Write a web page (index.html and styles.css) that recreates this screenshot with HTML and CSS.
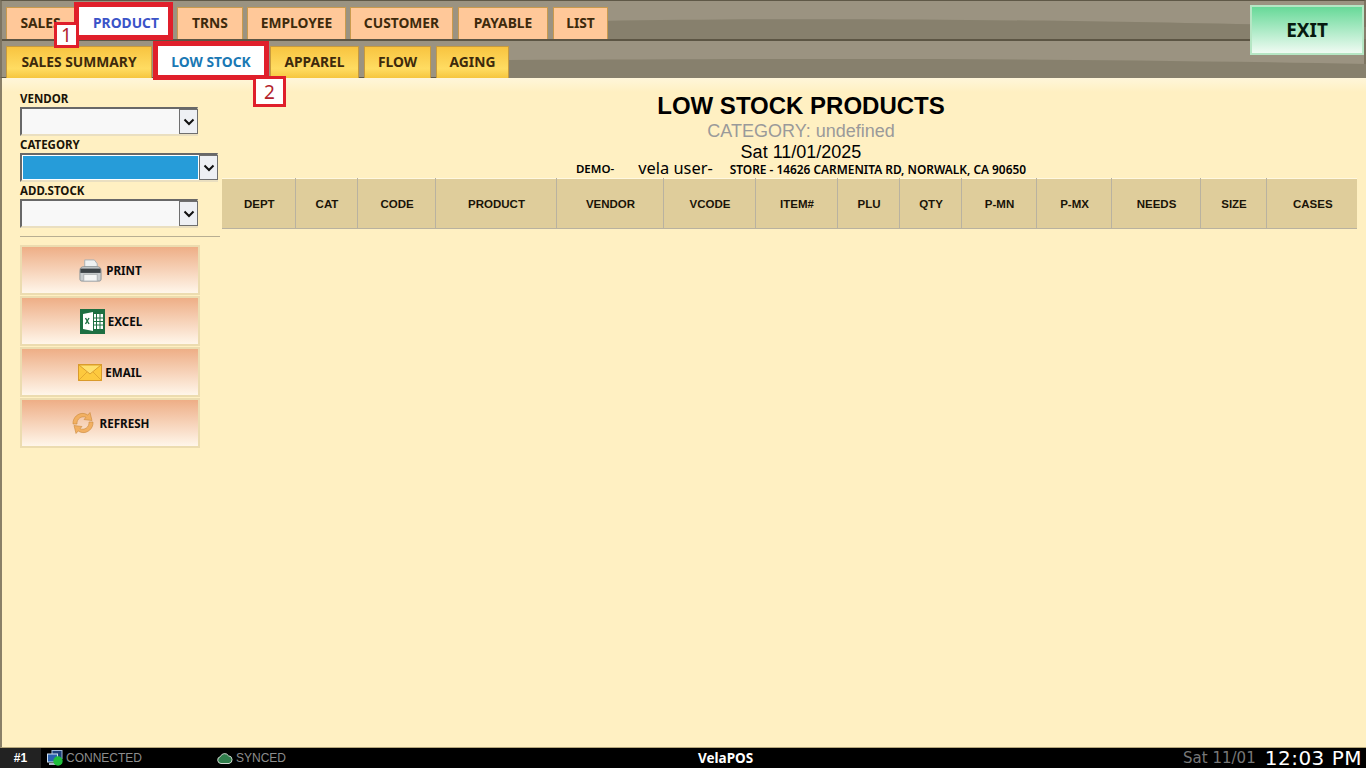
FILE: index.html
```html
<!DOCTYPE html>
<html lang="en">
<head>
<meta charset="utf-8">
<title>Low Stock Products</title>
<link rel="stylesheet" href="styles.css">
</head>
<body>
<div class="app">
  <header class="nav">
    <svg class="wave" viewBox="0 0 1366 78" preserveAspectRatio="none" aria-hidden="true">
      <path class="wave-low" d="M600 21 C800 18 1000 18 1366 27 L1366 39 L600 39 Z"/>
      <path class="wave-low" d="M505 60 C800 59 1000 57 1366 64 L1366 78 L505 78 Z"/>
    </svg>
    <div class="tabrow tabrow-main">
      <a class="tab w-sales">SALES</a>
      <a class="tab w-product active-main">PRODUCT</a>
      <a class="tab w-trns">TRNS</a>
      <a class="tab w-employee">EMPLOYEE</a>
      <a class="tab w-customer">CUSTOMER</a>
      <a class="tab w-payable">PAYABLE</a>
      <a class="tab w-list">LIST</a>
    </div>
    <div class="tabrow tabrow-sub">
      <a class="tab sub w-summary">SALES SUMMARY</a>
      <a class="tab sub w-low active-sub">LOW STOCK</a>
      <a class="tab sub w-apparel">APPAREL</a>
      <a class="tab sub w-flow">FLOW</a>
      <a class="tab sub w-aging">AGING</a>
    </div>
    <button class="exit">EXIT</button>
    <span class="callout callout-1">1</span>
    <span class="callout callout-2">2</span>
  </header>

  <main class="main">
    <aside class="side">
      <div class="field">
        <label class="field-label">VENDOR</label>
        <div class="select"><span class="select-value"></span><span class="select-arrow"><svg viewBox="0 0 12 8"><path d="M1.5 1.5 6 6l4.5-4.5"/></svg></span></div>
      </div>
      <div class="field">
        <label class="field-label">CATEGORY</label>
        <div class="select select-wide"><span class="select-value selected"></span><span class="select-arrow"><svg viewBox="0 0 12 8"><path d="M1.5 1.5 6 6l4.5-4.5"/></svg></span></div>
      </div>
      <div class="field">
        <label class="field-label">ADD.STOCK</label>
        <div class="select"><span class="select-value"></span><span class="select-arrow"><svg viewBox="0 0 12 8"><path d="M1.5 1.5 6 6l4.5-4.5"/></svg></span></div>
      </div>
      <hr class="rule">
      <div class="actions">
        <button class="action">
          <svg class="ico" viewBox="0 0 26 26"><path d="M7 2h10l3 4v6H7z" fill="#eef1f2" stroke="#a9b0b4"/><path d="M2 13c0-3 2-4 4-4h14c2 0 4 1 4 4v9c0 1.500-1 2-2 2H4c-1 0-2-.5-2-2z" fill="#c8ccce" stroke="#8e9497"/><rect x="2.500" y="11" width="21" height="4.500" fill="#3c4347"/><rect x="6" y="17" width="14" height="7" fill="#f4f5f5" stroke="#aeb3b5"/></svg>
          <span>PRINT</span>
        </button>
        <button class="action">
          <svg class="ico ico-excel" viewBox="0 0 25 25"><rect width="25" height="25" fill="#1d6f42"/><path d="M3 5l10-2v19L3 20z" fill="#fff"/><rect x="14" y="5" width="9" height="15" fill="#fff"/><path d="M16.500 5v15M20 5v15M14 9h9M14 12.500h9M14 16h9" stroke="#1d6f42"/><path d="M5.500 9l3.500 6M9 9l-3.500 6" stroke="#1d6f42" stroke-width="1.400"/></svg>
          <span>EXCEL</span>
        </button>
        <button class="action">
          <svg class="ico ico-mail" viewBox="0 0 24 17"><rect x=".5" y=".5" width="23" height="16" fill="#fdc93e" stroke="#d99a2b"/><path d="M.5 16.500 9 8M23.500 16.500 15 8" stroke="#e5a92f"/><path d="M1 1l11 9L23 1z" fill="#ffe06f" stroke="#dc9f2e"/></svg>
          <span>EMAIL</span>
        </button>
        <button class="action">
          <svg class="ico ico-refresh" viewBox="0 0 24 24"><g fill="#f2b062" stroke="#c98a3e" stroke-width=".6"><path d="M2 13C1.500 6.500 7.500 1.500 13 2.500c1.500.3 2.800.8 3.800 1.600L19 1.500l2 8-8-1 2-2.200C11 4.500 5.500 7.500 6 13z"/><path d="M22 11c.5 6.500-5.500 11.500-11 10.500-1.500-.3-2.800-.8-3.800-1.600L5 22.500l-2-8 8 1-2 2.200c4 1.800 9.500-1.200 9-6.700z"/></g></svg>
          <span>REFRESH</span>
        </button>
      </div>
    </aside>

    <section class="report">
      <div class="report-head">
        <h1 class="report-title">LOW STOCK PRODUCTS</h1>
        <div class="report-cat">CATEGORY: undefined</div>
        <div class="report-date">Sat 11/01/2025</div>
        <div class="report-meta"><b class="meta-demo">DEMO-</b><span class="meta-user">vela user-</span><b class="meta-store">STORE - 14626 CARMENITA RD, NORWALK, CA 90650</b></div>
      </div>
      <table class="grid">
        <thead>
          <tr>
            <th class="c-dept">DEPT</th><th class="c-cat">CAT</th><th class="c-code">CODE</th><th class="c-product">PRODUCT</th><th class="c-vendor">VENDOR</th><th class="c-vcode">VCODE</th><th class="c-item">ITEM#</th><th class="c-plu">PLU</th><th class="c-qty">QTY</th><th class="c-pmn">P-MN</th><th class="c-pmx">P-MX</th><th class="c-needs">NEEDS</th><th class="c-size">SIZE</th><th class="c-cases">CASES</th>
          </tr>
        </thead>
      </table>
    </section>
  </main>

  <footer class="status">
    <div class="station">#1</div>
    <div class="stat stat-conn">
      <svg class="stat-ico" viewBox="0 0 16 16"><rect x="5" y=".5" width="10" height="8" fill="#1d3f7a" stroke="#9fb7d8"/><rect x=".5" y="4" width="10" height="8" fill="#2a62b0" stroke="#cfe0f2"/><rect x="2" y="13" width="7" height="2" fill="#a8b8c8"/><circle cx="11" cy="11" r="4.700" fill="#1fbf3c"/></svg>
      <span>CONNECTED</span>
    </div>
    <div class="stat stat-sync">
      <svg class="stat-ico cloud" viewBox="0 0 16 11"><path d="M4 10.500a3.500 3.500 0 0 1-.6-6.900A4.500 4.500 0 0 1 11.500 2.800 3.900 3.900 0 0 1 12 10.500z" fill="#2f7d4b" stroke="#cfd6cf"/></svg>
      <span>SYNCED</span>
    </div>
    <div class="brand">VelaPOS</div>
    <div class="clock"><span class="clock-date">Sat 11/01</span><span class="clock-time">12:03 PM</span></div>
  </footer>
</div>
</body>
</html>
```
FILE: styles.css
```css
* { box-sizing: border-box; }
html, body { margin: 0; height: 100%; overflow: hidden; }
body { font-family: "Noto Sans", "Open Sans", sans-serif; color: #000; background: #fff0c2; }

.app { width: 1366px; height: 768px; display: flex; flex-direction: column; }

/* top navigation */
.nav {
  position: relative;
  flex: 0 0 78px;
  min-height: 0;
  height: 78px;
  background: #9b9381;
  border-top: 1px solid #5f5847;
  border-left: 2px solid #7d7461;
  border-right: 2px solid #7d7461;
  border-bottom: 1px solid #5f5847;
}
.wave { position: absolute; left: -2px; top: -1px; width: 1366px; height: 78px; }
.wave-low { fill: #87806d; }
.tabrow { position: relative; display: flex; padding-left: 4px; align-items: flex-end; }
.tabrow-main { height: 40px; gap: 4px; border-bottom: 2px solid #5c5544; }
.tabrow-sub { height: 37px; gap: 5px; }
.tab {
  display: flex; align-items: center; justify-content: center;
  height: 32px; padding-bottom: 2px;
  font-size: 13.800px; font-weight: 700; color: #3d2a0c;
  background: #ffc899;
  border: 1px solid #c99a4e;
  border-bottom: 0;
  white-space: nowrap;
}
.tab.sub { background: linear-gradient(#f8c440, #ffdc62 70%, #f6c63e); border-color: #c79a3e; }
.w-sales { width: 69px; }
.w-product { width: 93px; }
.w-trns { width: 66px; margin-left: 2px; }
.w-employee { width: 99px; }
.w-customer { width: 103px; }
.w-payable { width: 90px; margin-left: 1px; }
.w-list { width: 55px; margin-left: 1px; }
.w-summary { width: 146px; }
.w-low { width: 110px; }
.w-apparel { width: 89px; }
.w-flow { width: 67px; }
.w-aging { width: 73px; }
.tab.active-main {
  align-self: flex-start;
  height: 32px; margin: 4px 1px 0 -2px; padding: 3px 0 0 5px;
  background: #fff; color: #3a53c8;
  outline: 5px solid #e01f2b; outline-offset: -2px; border: 0; z-index: 1;
}
.tab.active-sub {
  align-self: flex-start;
  height: 33px; margin: 3px -1px 0 -1px; padding: 1px 0 0;
  background: #fff; color: #1a78b4;
  outline: 5px solid #e01f2b; outline-offset: -2px; border: 0; z-index: 1;
}
.exit {
  position: absolute; top: 4px; right: 0; width: 114px; height: 50px;
  font: 700 19px "Noto Sans", sans-serif; color: #071a10;
  background: linear-gradient(#67d998, #f0fbf3);
  border: 2px solid #b6e6c4;
  padding: 0; z-index: 2;
}
.callout {
  position: absolute; z-index: 3;
  display: flex; align-items: center; justify-content: center;
  background: #fff; color: #b3232d;
  font: 400 19px "Noto Sans", sans-serif;
  border: 3px solid #e01f2b;
}
.callout-1 { left: 52px; top: 21px; width: 25px; height: 26px; }
.callout-2 { left: 251px; top: 75px; width: 33px; height: 31px; }

/* body */
.main {
  flex: 1; display: flex; min-height: 0;
  border-left: 2px solid #8a8068;
  border-bottom: 1px solid #b5a67a;
  background: linear-gradient(#fff6da, #fff0c2 14px);
}
.side { flex: 0 0 220px; padding: 13px 0 0 18px; }
.field { margin-bottom: 1px; }
.field-label { display: block; height: 16px; font-size: 11.500px; font-weight: 700; line-height: 16px; color: #1a1408; }
.select { display: flex; width: 178px; height: 29px; margin-bottom: 1px; background: #f8f8f8; border-top: 2px solid #686868; border-left: 2px solid #686868; border-right: 1px solid #eadfc0; border-bottom: 2px solid #eadfc0; }
.select-wide { width: 198px; }
.select-value { flex: 1; }
.select-value.selected { background: #269cd9; border: 1px solid #fff; margin: 0; }
.select-arrow { flex: 0 0 19px; margin-right: -1px; display: flex; align-items: center; justify-content: center; background: #eef0f4; border: 1px solid #6f6f6f; }
.select-arrow svg { width: 12px; height: 8px; fill: none; stroke: #101010; stroke-width: 2; }
.rule { width: 200px; height: 1px; margin: 8px 0 8px; border: 0; background: #b8ae92; }
.actions { display: flex; flex-direction: column; gap: 1px; }
.action {
  width: 180px; height: 50px; padding: 0;
  display: flex; align-items: center; justify-content: center; gap: 3px;
  font: 700 11.600px "Noto Sans", sans-serif; color: #0c0c0c;
  background: linear-gradient(#eeae86, #fff6ea);
  border: 2px solid #ecdcb0;
}
.ico { width: 25px; height: 25px; }
.ico-excel { margin-left: 2px; }
.ico-mail { width: 24px; height: 17px; }
.ico-refresh { width: 24px; height: 24px; margin-right: 2px; }

/* report */
.report { flex: 1; min-width: 0; padding-top: 14px; }
.report-head { padding-left: 14px; text-align: center; font-family: "Liberation Sans", Arial, sans-serif; }
.report-title { margin: 0; height: 27px; line-height: 27px; font-size: 24px; font-weight: 700; }
.report-cat { height: 21px; line-height: 25px; font-size: 18px; color: #9a9a9a; }
.report-date { height: 21px; line-height: 25px; font-size: 18px; }
.report-meta { height: 17px; display: flex; justify-content: center; white-space: nowrap; }
.meta-demo { font: 600 11.500px/16px "Noto Sans", sans-serif; }
.meta-store { font: 600 11.900px/16px "Noto Sans", sans-serif; }
.meta-user { font: 400 16.400px/13px "Noto Sans", sans-serif; margin: 0 17px 0 24px; }
.grid { width: 1134px; table-layout: fixed; border-collapse: collapse; }
.grid th {
  height: 50px; padding: 0 0 0 2px;
  font: 700 11.500px "Liberation Sans", Arial, sans-serif; color: #1a1408;
  background: #dfcd9b;
  border-right: 1px solid #b9b2a0;
  border-top: 1px solid #fff8e0;
  border-bottom: 1px solid #b9b2a0;
}
.grid th:last-child { border-right: 0; }
.c-dept { width: 73px; } .c-cat { width: 62px; } .c-code { width: 78px; } .c-product { width: 121px; }
.c-vendor { width: 107px; } .c-vcode { width: 92px; } .c-item { width: 82px; } .c-plu { width: 62px; }
.c-qty { width: 62px; } .c-pmn { width: 75px; } .c-pmx { width: 75px; } .c-needs { width: 89px; }
.c-size { width: 66px; } .c-cases { width: 91px; }

/* status bar */
.status { flex: 0 0 20px; min-height: 0; height: 20px; display: flex; align-items: center; background: #000; color: #8d8d8d; font-family: "Liberation Sans", Arial, sans-serif; position: relative; }
.station { flex: 0 0 41px; height: 20px; line-height: 20px; text-align: center; background: #222; color: #fff; font-size: 12px; font-weight: 700; }
.stat { display: flex; align-items: center; gap: 3px; font-size: 12px; }
.stat-conn { margin-left: 6px; width: 170px; }
.stat-sync { width: 430px; }
.stat-ico { width: 16px; height: 16px; }
.cloud { height: 11px; }
.brand { position: absolute; left: 698px; top: 0; font: 700 13.500px/20px "Noto Sans", sans-serif; color: #fff; }
.clock { margin-left: auto; display: flex; align-items: center; padding-right: 4px; font-family: "DejaVu Sans", sans-serif; line-height: 20px; }
.clock-date { font-size: 15px; color: #777; margin-right: 9px; }
.clock-time { font-size: 20px; color: #fff; letter-spacing: .5px; }
```
